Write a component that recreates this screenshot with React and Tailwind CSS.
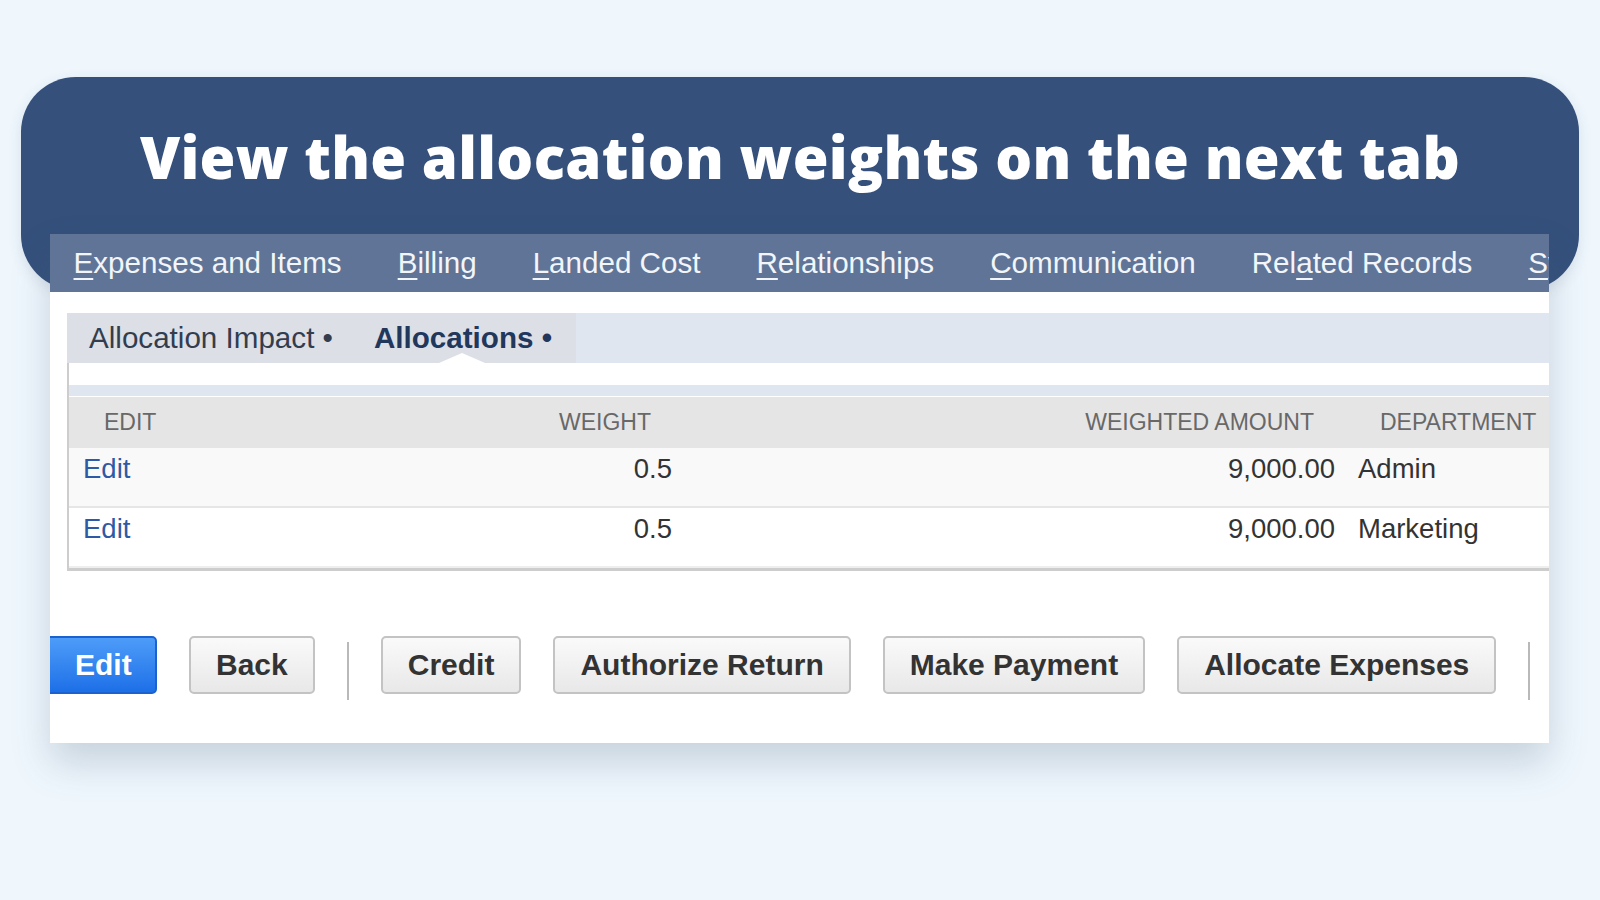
const tabs = [
  { pre: '', key: 'E', post: 'xpenses and Items' },
  { pre: '', key: 'B', post: 'illing' },
  { pre: '', key: 'L', post: 'anded Cost' },
  { pre: '', key: 'R', post: 'elationships' },
  { pre: '', key: 'C', post: 'ommunication' },
  { pre: 'Rel', key: 'a', post: 'ted Records' },
  { pre: '', key: 'S', post: 'ystem Information' },
]

const rows = [
  { weight: '0.5', amount: '9,000.00', dept: 'Admin', bg: 'bg-[#f9f9f9]' },
  { weight: '0.5', amount: '9,000.00', dept: 'Marketing', bg: 'bg-white' },
]

function GrayButton({ children }) {
  return (
    <button className="h-[58px] shrink-0 rounded-[5px] border-2 border-[#c3c3c3] bg-linear-to-b from-[#fafafa] to-[#e8e8e8] px-[25px] text-[30px] font-bold leading-none text-[#333]">
      {children}
    </button>
  )
}

function Divider() {
  return <div className="mt-[6px] h-[58px] w-[2px] shrink-0 self-start bg-[#b9b9b9]" />
}

export default function App() {
  return (
    <div
      className="h-[900px] w-[1600px] overflow-hidden bg-[#eff7fd] pt-[77px]"
      style={{ fontFamily: '"Liberation Sans", Arial, sans-serif' }}
    >
      <div className="ml-[21px] h-[213px] w-[1558px] rounded-[55px] bg-[#34507b] pt-[51px] shadow-[0_4px_14px_rgba(40,60,90,0.12)]">
        <h1
          className="text-center text-[58px] font-extrabold leading-[58px] tracking-[0.3px] text-white"
          style={{ fontFamily: '"Open Sans", sans-serif' }}
        >
          View the allocation weights on the next tab
        </h1>
      </div>

      <div className="relative z-10 -mt-[56px] ml-[50px] h-[509px] w-[1499px] overflow-hidden bg-white shadow-[0_20px_36px_rgba(70,95,120,0.24)]">
        {/* main tabs */}
        <div className="flex h-[58px] items-center gap-[56px] overflow-hidden whitespace-nowrap bg-[#5f7496] pl-[23.5px] text-[29.6px] leading-none text-[#f2f5f9]">
          {tabs.map((t) => (
            <span key={t.post}>
              {t.pre}
              <span className="underline decoration-[2px] underline-offset-[5px]">{t.key}</span>
              {t.post}
            </span>
          ))}
        </div>

        {/* sub tabs */}
        <div className="ml-[17px] mt-[21px] flex h-[50px] bg-[#dfe6ef]">
          <div className="flex h-full items-center bg-[#dcdfe6] pl-[22px] pr-[24px] text-[29.6px] leading-none">
            <span className="text-[#333d4e]">Allocation Impact •</span>
            <span className="relative ml-[41px] h-full">
              <span className="flex h-full items-center font-bold text-[#22375c]">Allocations •</span>
              <span className="absolute bottom-0 left-[65px] h-0 w-0 border-x-[23px] border-b-[10px] border-x-transparent border-b-white" />
            </span>
          </div>
        </div>

        {/* allocations table */}
        <div className="ml-[17px] border-b-[3px] border-l-2 border-[#cdcdcd] pt-[22px]">
          <div className="h-[11px] bg-[#dfe6ef]" />
          <div className="mt-px grid h-[51px] grid-cols-[231px_382px_664px_1fr] items-center bg-[#e5e5e5] text-[23px] leading-none text-[#686868]">
            <div className="pl-[35px]">EDIT</div>
            <div className="pr-[31px] text-right">WEIGHT</div>
            <div className="pr-[32px] text-right">WEIGHTED AMOUNT</div>
            <div className="whitespace-nowrap pl-[34px]">DEPARTMENT</div>
          </div>
          {rows.map((r, i) => (
            <div
              key={r.dept}
              className={`grid h-[60px] grid-cols-[231px_382px_664px_1fr] pt-[7px] text-[27.5px] leading-[28px] text-[#333] ${r.bg} ${
                i === 0 ? 'border-b-2 border-[#e6e6e6]' : 'border-b-2 border-[#eeeeee]'
              }`}
            >
              <div className="pl-[14px] text-[#2d5aa6]">Edit</div>
              <div className="pr-[10px] text-right">{r.weight}</div>
              <div className="pr-[11px] text-right">{r.amount}</div>
              <div className="pl-[12px]">{r.dept}</div>
            </div>
          ))}
        </div>

        {/* action buttons */}
        <div className="mt-[65px] flex items-start gap-[32px]">
          <button className="-ml-[12px] h-[58px] w-[119px] shrink-0 rounded-[5px] border-2 border-[#1c62cf] bg-linear-to-b from-[#4d9cf9] to-[#1d6fe7] pl-[35px] text-left text-[30px] font-bold leading-none text-white">
            Edit
          </button>
          <GrayButton>Back</GrayButton>
          <Divider />
          <GrayButton>Credit</GrayButton>
          <GrayButton>Authorize Return</GrayButton>
          <GrayButton>Make Payment</GrayButton>
          <GrayButton>Allocate Expenses</GrayButton>
          <Divider />
        </div>
      </div>
    </div>
  )
}
